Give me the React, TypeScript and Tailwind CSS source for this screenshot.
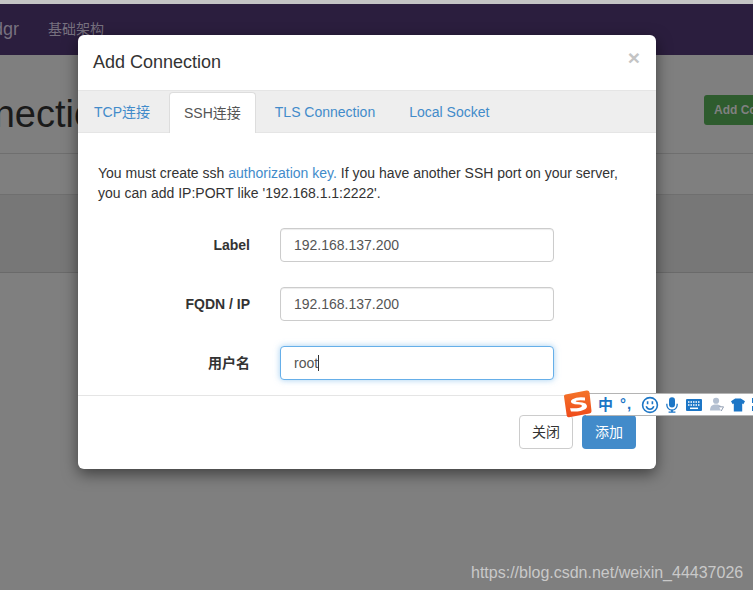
const font = { fontFamily: '"Liberation Sans", "Noto Sans CJK SC", sans-serif' };

function Field({ label, value, focused }: { label: string; value: string; focused?: boolean }) {
  return (
    <div className="flex items-center h-[34px]">
      <label className="w-[152px] text-right text-[14px] font-bold text-[#333] shrink-0">{label}</label>
      <div className="w-[30px] shrink-0" />
      <div
        className={
          focused
            ? "w-[274px] h-[34px] flex items-center px-[13px] rounded-[4px] border border-[#66afe9] shadow-[0_0_6px_rgba(102,175,233,0.6)] text-[14px] text-[#555] bg-white"
            : "w-[274px] h-[34px] flex items-center px-[13px] rounded-[4px] border border-[#ccc] shadow-[inset_0_1px_1px_rgba(0,0,0,0.075)] text-[14px] text-[#555] bg-white"
        }
      >
        {value}
        {focused && <span className="w-px h-[16px] bg-[#333]" />}
      </div>
    </div>
  );
}

function SogouBar() {
  return (
    <div className="absolute left-[564px] top-[390px] w-[189px] h-[28px]">
      <div className="absolute left-[22px] top-[3px] right-0 h-[23px] bg-white border-y border-[#b4b4b4] flex items-center pl-[12px] text-[#1c76c6] overflow-hidden">
        <span className="text-[15px] font-bold leading-none w-[14px] shrink-0">中</span>
        <span className="text-[15px] font-bold leading-none w-[13px] ml-[8px] shrink-0 tracking-[1px] -mt-[3px]">°,</span>
        <svg className="ml-[8px] shrink-0" width="18" height="18" viewBox="0 0 18 18" fill="none" stroke="#1c76c6" strokeWidth="1.6">
          <circle cx="9" cy="9" r="7.4" />
          <path d="M5.2 10.2c.9 2.4 2.2 3 3.8 3s2.900-.6 3.800-3" />
          <path d="M6.600 5.300v3M11.400 5.300v3" />
        </svg>
        <svg className="ml-[7px] shrink-0" width="12" height="18" viewBox="0 0 14 19" fill="#1c76c6">
          <rect x="3.500" y="0.500" width="7" height="12" rx="3.500" />
          <path d="M1 8v1.500a6 6 0 0 0 12 0V8" fill="none" stroke="#1c76c6" strokeWidth="1.500" />
          <path d="M6 15h2v2h3v1.500H3V17h3z" />
        </svg>
        <svg className="ml-[8px] shrink-0" width="16" height="12" viewBox="0 0 16 12">
          <rect width="16" height="12" rx="1" fill="#1c76c6" />
          <path d="M2 3h12M2 6h12" stroke="#fff" strokeWidth="1.300" strokeDasharray="1.500 1" />
          <path d="M4 9.300h8" stroke="#fff" strokeWidth="1.500" />
        </svg>
        <svg className="ml-[8px] shrink-0" width="14" height="15" viewBox="0 0 15 15">
          <circle cx="6.500" cy="3.500" r="3.300" fill="#b3bfd0" />
          <path d="M0 14c0-5 2.500-6.500 6.500-6.500S13 9 13 14z" fill="#b3bfd0" />
          <path d="M9.500 10h5l-2.500 4.500" fill="#fff" stroke="#8a98ac" strokeWidth="1" />
        </svg>
        <svg className="ml-[7px] shrink-0" width="14" height="14" viewBox="0 0 15 14" fill="#1c76c6">
          <path d="M4.500 0h6L15 3l-1.800 3.200L12 5.500V14H3V5.500l-1.200.7L0 3z" />
        </svg>
        <svg className="ml-[7px] shrink-0" width="3" height="13" viewBox="0 0 3 13" fill="#1c76c6">
          <rect width="3" height="5" />
          <rect y="8" width="3" height="5" />
        </svg>
      </div>
      <svg className="absolute left-0 top-0" width="28" height="28" viewBox="0 0 28 28">
        <defs>
          <linearGradient id="sg" x1="0" y1="0" x2="0" y2="1">
            <stop offset="0" stopColor="#f4752a" />
            <stop offset="1" stopColor="#ef4a1a" />
          </linearGradient>
        </defs>
        <path d="M1.500 4.500 22.500 0.500Q25 0 25.500 2.500L27.500 21Q27.600 23 25.500 23.500L5 27.200Q3 27.500 2.700 25.500L0 6.500Q-.2 5 1.500 4.500z" fill="url(#sg)" />
        <path d="M21 7.500Q13 6.500 8.500 9.200 5.500 11 8 13.200 10 14.500 15 14.500 19 15 17.500 16.800 15 18.700 6 18.200L7 21.500Q17 22 21.500 19 24.500 16.500 21.500 13.600 19 12 14 12 10.700 11.700 12.200 10.700 15 9.800 21 10.500z" fill="#fff" />
      </svg>
    </div>
  );
}

export default function App() {
  return (
    <div className="relative w-[753px] h-[590px] overflow-hidden bg-[#7f7f7f]" style={font}>
      <div className="h-[4px] bg-[#c4c4c4]" />
      <div className="h-[51px] bg-[#2b1e3e] flex items-center text-[14px] text-[#77717f]">
        <span className="text-[18px] -ml-[11px] w-[59px] shrink-0">ldgr</span>
        <span>基础架构</span>
      </div>
      <div className="h-[99px] border-b border-[#6f6f6f] flex items-center justify-between">
        <span className="text-[38px] text-[#1a1a1a] -ml-[76px] mt-[20px] whitespace-nowrap">Connections</span>
        <span className="w-[49px] h-[30px] self-start mt-[40px] bg-[#2e5c2e] rounded-l-[3px] text-[#808080] text-[12px] font-bold flex items-center pl-[10px] overflow-hidden whitespace-nowrap">Add Connection</span>
      </div>
      <div className="h-[41px] border-b border-[#6f6f6f]" />
      <div className="h-[78px] bg-[#777777] border-b border-[#6a6a6a]" />

      <div className="absolute left-[78px] top-[35px] w-[578px] h-[434px] bg-white rounded-[6px] shadow-[0_5px_15px_rgba(0,0,0,0.5)] flex flex-col text-[14px] text-[#333]">
        <div className="h-[55px] shrink-0 flex items-center justify-between pl-[15px] pr-[16px]">
          <span className="text-[18px]">Add Connection</span>
          <span className="text-[21px] font-bold text-[#c4c4c4] -mt-[11px] leading-none">×</span>
        </div>
        <div className="h-[43px] shrink-0 bg-[#eeeeee] border-y border-[#e5e5e5] flex items-end text-[#428bca]">
          <span className="h-[40px] pl-[16px] pr-[19px] flex items-center">TCP连接</span>
          <span className="h-[41px] -mb-px px-[14px] flex items-center bg-white border border-b-0 border-[#ddd] rounded-t-[4px] text-[#555]">SSH连接</span>
          <span className="h-[40px] pl-[19px] pr-[16px] flex items-center">TLS Connection</span>
          <span className="h-[40px] pl-[18px] flex items-center">Local Socket</span>
        </div>
        <div className="flex-1 min-h-0 pt-[30px] px-[20px] flex flex-col">
          <p className="leading-[20px] mb-[25px]">
            You must create ssh <span className="text-[#428bca]">authorization key.</span> If you have another SSH port on your server,
            <br />
            you can add IP:PORT like '192.168.1.1:2222'.
          </p>
          <div className="flex flex-col gap-[25px]">
            <Field label="Label" value="192.168.137.200" />
            <Field label="FQDN / IP" value="192.168.137.200" />
            <Field label="用户名" value="root" focused />
          </div>
        </div>
        <div className="h-[74px] shrink-0 border-t border-[#e5e5e5] flex items-start justify-end gap-[9px] pt-[19px] pr-[20px]">
          <span className="w-[54px] h-[34px] flex items-center justify-center rounded-[4px] border border-[#ccc] bg-white">关闭</span>
          <span className="w-[54px] h-[34px] flex items-center justify-center rounded-[4px] bg-[#428bca] text-white">添加</span>
        </div>
      </div>

      <SogouBar />
      <span className="absolute left-[471px] top-[561px] text-[16px] text-[#c9c9c9] whitespace-nowrap">https://blog.csdn.net/weixin_44437026</span>
    </div>
  );
}
